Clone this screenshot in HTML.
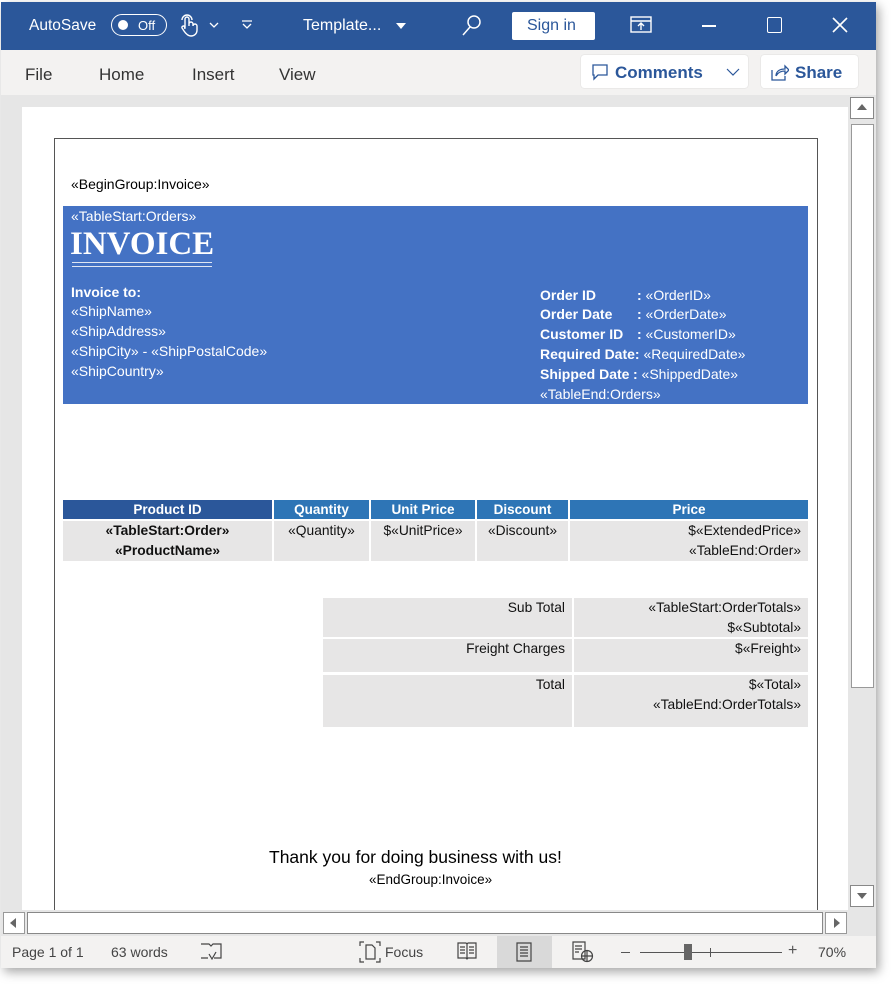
<!DOCTYPE html>
<html><head><meta charset="utf-8"><style>
*{margin:0;padding:0;box-sizing:border-box}
body{width:895px;height:988px;background:#fff;position:relative;overflow:hidden;font-family:"Liberation Sans",sans-serif}
.a{position:absolute}
.win{left:1px;top:2px;width:875px;height:966px;box-shadow:3px 4px 10px rgba(0,0,0,.35);background:#f3f2f1}
.t{position:absolute;white-space:nowrap}
.w{color:#fff}
.blue .t{color:#fff;font-size:14px}
.hd{position:absolute;top:500px;height:19px;color:#fff;font-weight:bold;font-size:13.5px;text-align:center;line-height:19px}
.cell{position:absolute;background:#e7e6e6;font-size:13.8px;color:#111;line-height:20px}
</style></head><body>
<div class="a win"></div>
<div class="a" style="left:1px;top:2px;width:875px;height:48px;background:#2b579a"></div>
<div class="t w" style="left:29px;top:17px;font-size:15.5px">AutoSave</div>
<div class="a" style="left:111px;top:14px;width:56px;height:22px;border:1.5px solid #fff;border-radius:11px"></div>
<div class="a" style="left:118px;top:20px;width:10px;height:10px;background:#fff;border-radius:50%"></div>
<div class="t w" style="left:138px;top:18px;font-size:13px">Off</div>
<svg class="a" style="left:178px;top:14px" width="22" height="24" viewBox="0 0 22 24" fill="none" stroke="#fff" stroke-width="1.4"><path d="M7 14V5a2 2 0 0 1 4 0v7m0-2a2 2 0 0 1 4 0v2m0 0a2 2 0 0 1 4 0v4c0 4-3 6-6 6s-5-2-7-5l-2-3a1.5 1.5 0 0 1 2.5-1.5L7 15"/><path d="M4 6a5 5 0 0 1 10 0"/></svg>
<svg class="a" style="left:209px;top:22px" width="10" height="6" fill="none" stroke="#fff" stroke-width="1.3"><path d="M1 1l4 4 4-4"/></svg>
<svg class="a" style="left:241px;top:20px" width="12" height="10"><path d="M1 1h10M2 4l4 4 4-4" stroke="#fff" stroke-width="1.3" fill="none"/></svg>
<div class="t w" style="left:303px;top:17px;font-size:16px">Template...</div>
<svg class="a" style="left:396px;top:23px" width="10" height="6"><path d="M0 0h10L5 6z" fill="#fff"/></svg>
<svg class="a" style="left:460px;top:13px" width="24" height="24" fill="none" stroke="#fff" stroke-width="1.5"><circle cx="14" cy="9" r="6"/><path d="M10 14L3 22"/></svg>
<div class="a" style="left:512px;top:12px;width:83px;height:28px;background:#fff;border-radius:2px"></div>
<div class="t" style="left:527px;top:17px;font-size:16px;color:#2b579a">Sign in</div>
<svg class="a" style="left:630px;top:16px" width="22" height="18" fill="none" stroke="#fff" stroke-width="1.4"><rect x="1" y="1" width="20" height="15"/><path d="M1 5h20M11 14V7M8 10l3-3 3 3"/></svg>
<div class="a" style="left:702px;top:25px;width:14px;height:1.5px;background:#fff"></div>
<div class="a" style="left:767px;top:17px;width:15px;height:16px;border:1.5px solid #fff;border-radius:2px"></div>
<svg class="a" style="left:832px;top:17px" width="16" height="16" stroke="#fff" stroke-width="1.6"><path d="M1 1l14 14M15 1L1 15"/></svg>
<div class="t" style="left:25px;top:65px;font-size:17px;color:#333">File</div>
<div class="t" style="left:99px;top:65px;font-size:17px;color:#333">Home</div>
<div class="t" style="left:192px;top:65px;font-size:17px;color:#333">Insert</div>
<div class="t" style="left:279px;top:65px;font-size:17px;color:#333">View</div>
<div class="a" style="left:581px;top:55px;width:167px;height:33px;background:#fff;border-radius:3px;box-shadow:0 0 1px #bbb"></div>
<svg class="a" style="left:592px;top:64px" width="16" height="17" fill="none" stroke="#2b579a" stroke-width="1.3"><path d="M1 1h14v10H6l-4 4v-4H1z"/></svg>
<div class="t" style="left:615px;top:63px;font-size:17px;font-weight:bold;color:#2b579a">Comments</div>
<svg class="a" style="left:726px;top:68px" width="14" height="8" fill="none" stroke="#2b579a" stroke-width="1.2"><path d="M1 1l6 6 6-6"/></svg>
<div class="a" style="left:761px;top:55px;width:97px;height:33px;background:#fff;border-radius:3px;box-shadow:0 0 1px #bbb"></div>
<svg class="a" style="left:771px;top:64px" width="18" height="17" fill="none" stroke="#2b579a" stroke-width="1.3"><path d="M1 6v10h13v-4M5 12c0-5 4-7 9-7V2l4 4-4 4V7c-4 0-7 1-9 5"/></svg>
<div class="t" style="left:795px;top:63px;font-size:17px;font-weight:bold;color:#2b579a">Share</div>
<div class="a" style="left:1px;top:95px;width:847px;height:815px;background:#e6e6e6"></div>
<div class="a" style="left:22px;top:107px;width:826px;height:803px;background:#fff"></div>
<div class="a" style="left:54px;top:138px;width:764px;height:780px;border:1px solid #555"></div>
<div class="a" style="left:848px;top:95px;width:28px;height:815px;background:#e6e6e6"></div>
<div class="a" style="left:850px;top:97px;width:24px;height:22px;background:#fff;border:1px solid #888"></div>
<svg class="a" style="left:857px;top:104px" width="10" height="6"><path d="M0 6h10L5 0z" fill="#666"/></svg>
<div class="a" style="left:851px;top:124px;width:23px;height:564px;background:#fff;border:1px solid #999"></div>
<div class="a" style="left:850px;top:885px;width:24px;height:22px;background:#fff;border:1px solid #888"></div>
<svg class="a" style="left:857px;top:893px" width="10" height="6"><path d="M0 0h10L5 6z" fill="#666"/></svg>
<div class="a" style="left:1px;top:910px;width:875px;height:26px;background:#e6e6e6"></div>
<div class="a" style="left:3px;top:912px;width:22px;height:22px;background:#fff;border:1px solid #999"></div>
<svg class="a" style="left:10px;top:918px" width="6" height="10"><path d="M6 0v10L0 5z" fill="#666"/></svg>
<div class="a" style="left:27px;top:912px;width:796px;height:22px;background:#fff;border:1px solid #888"></div>
<div class="a" style="left:825px;top:912px;width:22px;height:22px;background:#fff;border:1px solid #999"></div>
<svg class="a" style="left:834px;top:918px" width="6" height="10"><path d="M0 0v10l6-5z" fill="#666"/></svg>
<div class="a" style="left:1px;top:936px;width:875px;height:32px;background:#f3f2f1"></div>
<div class="a" style="left:497px;top:936px;width:55px;height:32px;background:#d9d9d9"></div>
<div class="t" style="left:12px;top:944px;font-size:14px;color:#444">Page 1 of 1</div>
<div class="t" style="left:111px;top:944px;font-size:14px;color:#444">63 words</div>
<svg class="a" style="left:200px;top:942px" width="22" height="20" fill="none" stroke="#444" stroke-width="1.2"><path d="M1 2h8l2 2 2-2h8v14H14M8 16H1zM9 12l3 5 4-7"/></svg>
<svg class="a" style="left:359px;top:941px" width="22" height="22" fill="none" stroke="#444" stroke-width="1.2"><path d="M1 5V1h4M17 1h4v4M1 17v4h4M21 17v4h-4M7 4h6l3 3v11H7z"/></svg>
<div class="t" style="left:385px;top:944px;font-size:14px;color:#444">Focus</div>
<svg class="a" style="left:457px;top:942px" width="20" height="18" fill="none" stroke="#444" stroke-width="1.2"><path d="M1 1h8l1 1 1-1h8v15h-8l-1 1-1-1H1zM10 2v14M3 5h5M3 8h5M3 11h5M12 5h5M12 8h5M12 11h5"/></svg>
<svg class="a" style="left:516px;top:942px" width="16" height="20" fill="none" stroke="#444" stroke-width="1.2"><path d="M1 1h14v18H1zM4 5h8M4 8h8M4 11h8M4 14h8"/></svg>
<svg class="a" style="left:572px;top:941px" width="22" height="22" fill="none" stroke="#444" stroke-width="1.2"><path d="M1 1h12v17H1zM3 5h7M3 8h7M3 11h4"/><circle cx="15" cy="15" r="5.5"/><path d="M9.5 15h11M15 9.5v11"/></svg>
<div class="a" style="left:621px;top:952px;width:9px;height:1px;background:#555"></div>
<div class="a" style="left:640px;top:952px;width:142px;height:1px;background:#555"></div>
<div class="a" style="left:684px;top:944px;width:8px;height:16px;background:#666"></div>
<div class="a" style="left:710px;top:948px;width:1px;height:9px;background:#555"></div>
<div class="t" style="left:788px;top:942px;font-size:16px;color:#555">+</div>
<div class="t" style="left:818px;top:944px;font-size:14px;color:#444">70%</div>
<div class="t" style="left:71px;top:176px;font-size:14px;color:#000">«BeginGroup:Invoice»</div>
<div class="a blue" style="left:63px;top:206px;width:745px;height:198px;background:#4472c4">
 <div class="t" style="left:8px;top:2px">«TableStart:Orders»</div>
 <div class="t" style="left:7px;top:20px;font-family:'Liberation Serif',serif;font-weight:bold;font-size:33px;color:#fff">INVOICE</div>
 <div class="a" style="left:9px;top:56px;width:140px;height:1px;background:#dfe6f3"></div>
 <div class="a" style="left:9px;top:60px;width:140px;height:1px;background:#dfe6f3"></div>
 <div class="t" style="left:8px;top:78px;font-weight:bold">Invoice to:</div>
 <div class="t" style="left:8px;top:97px">«ShipName»</div>
 <div class="t" style="left:8px;top:117px">«ShipAddress»</div>
 <div class="t" style="left:8px;top:137px">«ShipCity» - «ShipPostalCode»</div>
 <div class="t" style="left:8px;top:157px">«ShipCountry»</div>
 <div class="t" style="left:477px;top:81px;font-weight:bold">Order ID</div><div class="t" style="left:574px;top:81px"><b>:</b> «OrderID»</div>
 <div class="t" style="left:477px;top:100px;font-weight:bold">Order Date</div><div class="t" style="left:574px;top:100px"><b>:</b> «OrderDate»</div>
 <div class="t" style="left:477px;top:120px;font-weight:bold">Customer ID</div><div class="t" style="left:574px;top:120px"><b>:</b> «CustomerID»</div>
 <div class="t" style="left:477px;top:140px"><b>Required Date:</b> «RequiredDate»</div>
 <div class="t" style="left:477px;top:160px;font-weight:bold">Shipped Date</div><div class="t" style="left:570px;top:160px"><b>:</b> «ShippedDate»</div>
 <div class="t" style="left:477px;top:180px">«TableEnd:Orders»</div>
</div>
<div class="hd" style="left:63px;width:209px;background:#2b579a">Product ID</div>
<div class="hd" style="left:274px;width:95px;background:#2e75b6">Quantity</div>
<div class="hd" style="left:371px;width:104px;background:#2e75b6">Unit Price</div>
<div class="hd" style="left:477px;width:91px;background:#2e75b6">Discount</div>
<div class="hd" style="left:570px;width:238px;background:#2e75b6">Price</div>
<div class="cell" style="left:63px;top:521px;width:209px;height:40px;text-align:center;font-weight:bold">«TableStart:Order»<br>«ProductName»</div>
<div class="cell" style="left:274px;top:521px;width:95px;height:40px;text-align:center">«Quantity»</div>
<div class="cell" style="left:371px;top:521px;width:104px;height:40px;text-align:center">$«UnitPrice»</div>
<div class="cell" style="left:477px;top:521px;width:91px;height:40px;text-align:center">«Discount»</div>
<div class="cell" style="left:570px;top:521px;width:238px;height:40px;text-align:right;padding-right:7px">$«ExtendedPrice»<br>«TableEnd:Order»</div>
<div class="cell" style="left:323px;top:598px;width:249px;height:39px;text-align:right;padding-right:7px">Sub Total</div>
<div class="cell" style="left:574px;top:598px;width:234px;height:39px;text-align:right;padding-right:7px">«TableStart:OrderTotals»<br>$«Subtotal»</div>
<div class="cell" style="left:323px;top:639px;width:249px;height:33px;text-align:right;padding-right:7px">Freight Charges</div>
<div class="cell" style="left:574px;top:639px;width:234px;height:33px;text-align:right;padding-right:7px">$«Freight»</div>
<div class="cell" style="left:323px;top:675px;width:249px;height:52px;text-align:right;padding-right:7px">Total</div>
<div class="cell" style="left:574px;top:675px;width:234px;height:52px;text-align:right;padding-right:7px">$«Total»<br>«TableEnd:OrderTotals»</div>
<div class="t" style="left:269px;top:847px;font-size:17.5px;color:#000">Thank you for doing business with us!</div>
<div class="t" style="left:369px;top:872px;font-size:13.5px;color:#000">«EndGroup:Invoice»</div>
</body></html>
